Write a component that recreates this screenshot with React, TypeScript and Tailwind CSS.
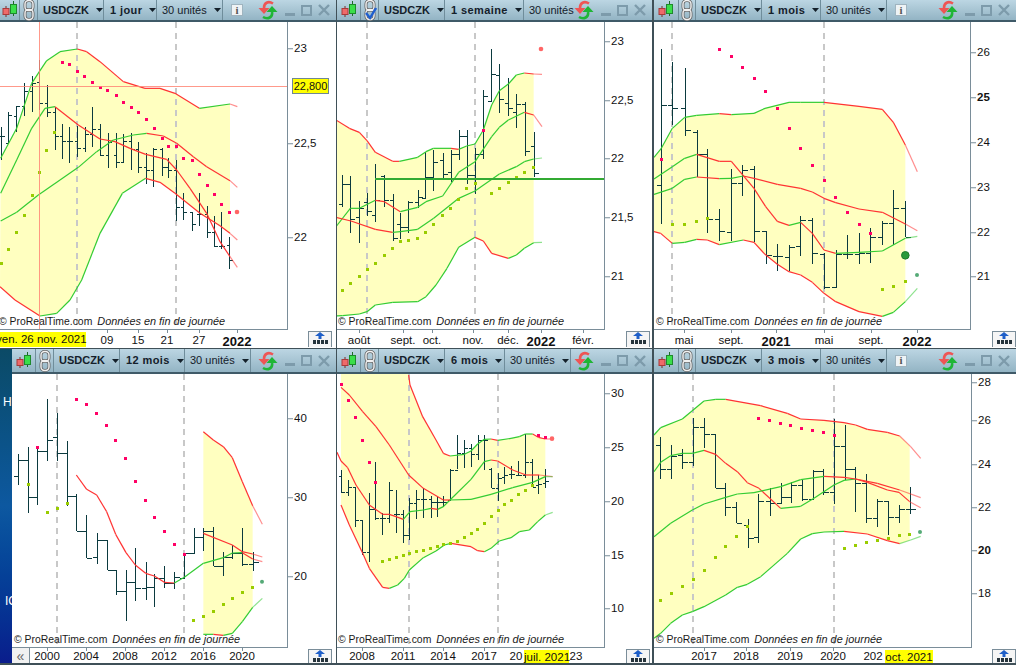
import React from "react";

type Pt = number[];
type Label = { at: number; text: string; bold?: boolean; noTick?: boolean };
type Flag = { text: string; left: number; width: number };

type Chart = {
  ox: number;
  oy: number;
  x0: number;
  y0: number;
  w: number;
  h: number;
  end: number;
  upper: Pt[];
  lower: Pt[];
  lines: Pt[][];
  prefix?: Pt[];
  bars: number[][];
  pink: Pt[];
  olive: Pt[];
  dashed: number[];
  lastRed?: Pt;
  lastGreen?: Pt;
  bigGreen?: Pt;
};

const BAR = "#0b3a3f";
const RED = "#ff3333";
const GREEN = "#33cc33";

const chart1: Chart = {
  ox: 0, oy: 60, x0: 0, y0: 22, w: 288, h: 308, end: 690,
  upper: [[2,295],[50,205],[95,70],[118,35],[140,2],[180,-25],[232,-33],[260,-25],[300,5],[370,65],[435,85],[480,85],[525,100],[598,145],[690,132],[712,140]],
  lower: [[0,680],[45,720],[120,768],[170,760],[210,720],[245,660],[300,520],[367,400],[437,355],[480,367],[525,400],[600,460],[660,497],[690,520],[712,540]],
  lines: [
    [[2,400],[50,300],[95,205],[135,145],[165,140],[235,195],[300,237],[345,245],[390,265],[437,283],[500,298],[530,330],[570,385],[620,460],[660,545],[690,590],[712,622]],
    [[2,483],[50,457],[115,405],[180,360],[235,322],[290,275],[340,240],[400,225],[440,220],[490,228],[530,250],[580,290],[620,320],[690,362],[712,382]],
  ],
  bars: [
    [3,200,300,227,227],[25,155,250,248,165],[48,138,215,168,138],[73,70,168,138,93],[95,48,155,93,68],[118,0,150,65,128],[140,75,172,128,157],
    [164,140,270,157,228],[187,192,298,228,243],[208,200,308,243,243],[232,198,292,243,265],[254,200,275,265,222],[277,142,260,222,207],[300,192,288,207,285],
    [323,220,323,285,245],[347,220,325,285,307],[368,222,305,307,243],[392,220,330,243,268],[415,245,340,268,322],[437,280,372,322,330],[460,265,380,330,268],
    [485,265,348,268,322],[505,295,355,322,330],[528,300,482,330,442],[550,398,480,442,455],[575,455,512,455,492],[598,400,498,462,462],[620,437,535,462,517],
    [643,467,560,517,558],[664,457,568,558,558],[688,530,628,555,600],
  ],
  pink: [[187,5],[208,13],[232,32],[253,49],[277,65],[301,80],[322,91],[347,106],[368,125],[392,140],[415,157],[437,178],[461,205],[485,235],[505,257],[529,259],[550,295],[575,301],[598,343],[620,376],[643,403],[664,433],[688,457]],
  olive: [[3,610],[25,568],[49,517],[73,466],[95,404],[118,337],[139,271],[163,217]],
  dashed: [77, 176],
  lastRed: [711,456],
};

const chart2: Chart = {
  ox: 336, oy: 20, x0: 337, y0: 22, w: 268, h: 308, end: 593,
  upper: [[0,300],[40,325],[70,337],[93,362],[118,397],[170,424],[190,424],[245,412],[270,395],[292,385],[345,385],[368,388],[392,378],[417,372],[442,330],[467,255],[490,212],[517,192],[541,165],[565,159],[593,162],[618,163]],
  lower: [[0,888],[20,887],[70,882],[93,875],[118,855],[170,847],[245,845],[270,830],[300,795],[333,745],[368,682],[417,652],[442,663],[467,700],[517,715],[541,705],[565,685],[593,668],[618,667]],
  lines: [
    [[0,620],[43,565],[70,565],[118,541],[145,545],[193,575],[245,562],[270,545],[320,528],[368,457],[417,425],[467,350],[490,322],[517,300],[565,277],[593,285],[618,320]],
    [[0,592],[45,603],[118,628],[170,637],[193,635],[245,628],[293,595],[368,535],[417,513],[490,462],[541,440],[565,425],[593,417],[618,414]],
  ],
  bars: [
    [19,465,560,553,493],[43,467,638,493,598],[70,543,670,592,565],[93,518,587,545,573],[118,432,605,585,541],[145,465,560,468,541],[170,522,662,541,653],
    [193,580,657,612,622],[217,543,638,622,547],[245,510,563,547,530],[268,395,535,535,472],[292,390,512,472,427],[320,400,475,420,462],[344,390,485,457,402],
    [368,330,420,403,348],[392,330,492,348,465],[417,385,523,465,403],[442,210,417,403,227],[466,88,243,243,163],[490,132,278,165,237],[517,175,287,250,265],
    [541,222,323,277,252],[566,247,407,252,393],[593,336,472,377,460],
  ],
  pink: [[442,330]],
  olive: [[19,811],[43,790],[70,769],[94,748],[118,730],[145,706],[169,685],[193,664],[217,661],[244,655],[268,637],[292,613],[319,586],[343,565],[367,538],[391,505],[418,490],[466,520],[490,505],[517,487],[541,472],[565,457],[592,442]],
  dashed: [367, 475],
  lastRed: [615,87],
};

const chart3: Chart = {
  ox: 654, oy: 20, x0: 654, y0: 22, w: 317, h: 308, end: 754,
  upper: [[0,412],[22,385],[55,325],[92,292],[128,286],[196,281],[232,284],[300,280],[333,265],[405,247],[440,247],[510,247],[615,259],[685,268],[718,307],[754,375],[790,455]],
  lower: [[0,635],[20,640],[55,670],[92,667],[128,658],[160,660],[196,674],[268,660],[300,667],[333,703],[370,733],[405,755],[440,765],[475,787],[510,820],[545,845],[615,875],[685,889],[718,877],[754,845],[790,805]],
  lines: [
    [[0,477],[55,440],[92,415],[128,403],[196,424],[232,424],[300,505],[335,560],[370,604],[405,616],[440,607],[475,640],[510,690],[545,700],[615,697],[685,693],[754,655],[790,649]],
    [[0,523],[55,505],[92,478],[128,471],[196,476],[232,475],[268,468],[300,475],[370,493],[440,505],[475,516],[510,535],[545,548],[615,567],[685,577],[754,612],[790,632]],
  ],
  bars: [
    [22,87,613,496,256],[55,127,315,256,265],[92,145,347,265,331],[128,331,470,337,403],[160,387,638,403,598],[196,568,662,598,634],[232,447,662,636,490],
    [265,435,527,490,450],[301,438,667,448,633],[335,635,733,633,706],[370,672,752,709,709],[406,675,752,712,682],[439,588,707,679,601],[475,595,733,601,700],
    [511,700,808,703,800],[545,690,800,800,703],[580,645,718,703,703],[616,640,733,703,700],[649,625,728,700,652],[685,603,675,652,609],[718,510,676,609,565],[754,543,652,565,652],
  ],
  pink: [[22,418],[196,88],[232,109],[265,142],[301,175],[334,214],[370,265],[406,325],[439,385],[475,436],[511,481],[544,532],[580,577],[616,613],[649,640]],
  olive: [[55,613],[91,613],[127,604],[160,595],[685,808],[718,799],[754,784]],
  dashed: [672, 824],
  lastGreen: [789,765],
  bigGreen: [754,706],
};

const chart4: Chart = {
  ox: 0, oy: 375, x0: 12, y0: 374, w: 276, h: 274, end: 758,
  upper: [[610,170],[640,195],[670,215],[697,248],[727,320],[758,392],[787,448]],
  lower: [[610,778],[640,778],[670,781],[697,775],[727,740],[758,697],[787,670]],
  lines: [
    [[229,300],[260,343],[290,360],[320,410],[347,478],[378,533],[406,570],[437,595],[463,603],[493,622],[523,624],[553,607],[610,565],[670,548],[697,534],[727,533],[758,552],[787,560]],
    [[610,475],[697,510],[727,530],[758,537],[787,546]],
  ],
  bars: [
    [55,237,330,303,256],[85,217,413,256,367],[112,212,390,367,229],[142,72,257,229,196],[172,115,257,187,235],[202,198,392,235,363],[229,358,468,363,468],
    [259,420,550,467,548],[290,475,567,547,495],[320,495,585,495,584],[347,585,660,584,647],[377,585,738,647,622],[406,520,678,622,640],[437,560,675,640,635],
    [463,597,695,635,608],[493,573,640,608,625],[523,592,642,625,605],[553,540,608,608,535],[581,460,535,535,487],[610,458,527,487,468],[640,457,573,468,573],
    [670,530,602,573,545],[697,510,553,545,535],[727,458,572,535,568],[758,530,587,568,560],
  ],
  pink: [[112,217],[229,73],[259,88],[289,115],[319,151],[346,196],[376,250],[406,319],[436,376],[463,427],[493,469],[523,508],[553,538]],
  olive: [[85,328],[142,412],[172,400],[202,385],[580,736],[610,724],[640,709],[670,688],[697,670],[727,652],[757,637]],
  dashed: [57, 184],
  lastGreen: [786,620],
};

const chart5: Chart = {
  ox: 336, oy: 375, x0: 337, y0: 374, w: 268, h: 274, end: 628,
  prefix: [[15,-6],[218,-6]],
  upper: [[218,0],[222,30],[260,125],[300,195],[322,235],[342,243],[385,238],[405,228],[425,207],[445,193],[465,192],[485,196],[525,190],[550,185],[568,177],[590,177],[607,187],[628,192],[650,192]],
  lower: [[15,390],[40,450],[80,535],[100,580],[140,637],[160,640],[185,630],[205,610],[220,585],[262,548],[300,528],[325,510],[345,505],[405,515],[425,527],[445,530],[465,520],[490,498],[525,488],[550,470],[580,465],[605,440],[628,420],[650,412]],
  lines: [
    [[3,232],[15,258],[35,278],[60,330],[100,390],[140,418],[160,418],[180,425],[202,433],[222,410],[262,405],[285,400],[305,403],[322,395],[342,375],[405,313],[445,260],[465,255],[485,258],[530,285],[570,300],[610,300],[650,305]],
    [[15,37],[40,60],[80,110],[120,155],[160,210],[218,300],[262,340],[322,375],[342,375],[405,373],[465,358],[530,338],[590,322],[628,305],[650,305]],
  ],
  bars: [
    [15,285,355,303,350],[37,315,362,350,337],[58,337,455,337,435],[79,435,540,435,532],[100,355,560,532,403],[118,262,435,403,428],[139,415,480,428,430],
    [160,320,445,430,345],[181,345,473,418,418],[202,405,503,418,480],[218,370,495,480,385],[241,345,432,385,373],[262,338,430,373,373],[284,363,428,372,380],
    [304,365,425,380,380],[322,363,395,380,380],[343,283,375,375,285],[364,180,283,285,235],[385,195,278,235,220],[406,208,275,220,238],[425,180,255,238,195],
    [445,180,285,195,195],[466,280,340,283,338],[487,295,378,338,308],[505,275,327,305,300],[526,273,312,298,298],[547,258,302,300,300],[568,178,308,300,260],
    [589,253,335,260,335],[607,300,357,330,328],[628,282,338,325,317],
  ],
  pink: [[16,26],[37,76],[58,127],[79,194],[100,262],[118,322],[607,181],[628,187]],
  olive: [[139,559],[160,553],[181,547],[202,541],[220,535],[241,529],[262,526],[283,520],[304,514],[322,508],[343,505],[364,499],[385,487],[406,475],[424,463],[445,445],[466,424],[487,406],[505,388],[526,376],[547,358],[568,346],[589,331]],
  dashed: [409, 498],
  lastRed: [648,191],
};

const chart6: Chart = {
  ox: 654, oy: 375, x0: 654, y0: 374, w: 318, h: 274, end: 767,
  upper: [[0,180],[20,158],[85,132],[150,78],[185,73],[215,73],[320,92],[400,115],[440,132],[510,136],[570,143],[605,150],[640,163],[700,172],[737,183],[770,215],[800,250]],
  lower: [[0,790],[20,775],[50,745],[85,720],[115,710],[150,695],[215,660],[250,637],[280,628],[320,605],[400,535],[440,492],[475,476],[510,471],[570,469],[640,477],[700,497],[737,506],[770,495],[800,484]],
  lines: [
    [[0,290],[20,262],[50,242],[85,235],[115,235],[150,226],[185,238],[215,265],[250,290],[280,323],[315,340],[380,400],[440,394],[480,370],[540,330],[570,316],[605,312],[640,322],[700,345],[735,352],[767,380],[800,398]],
    [[0,485],[50,445],[115,405],[150,387],[215,367],[250,357],[300,353],[380,335],[440,314],[510,304],[570,307],[605,312],[670,325],[737,345],[800,368]],
  ],
  bars: [
    [18,187,313,210,283],[52,210,313,283,242],[85,222,282,240,261],[118,130,272,261,157],[151,130,218,157,178],[184,178,340,178,340],[214,325,422,340,396],
    [247,382,445,396,443],[281,433,520,450,490],[313,357,503,487,379],[347,340,422,379,385],[380,323,385,385,367],[410,320,385,367,330],[443,315,378,330,372],
    [476,285,370,372,288],[508,283,360,288,352],[541,132,387,352,214],[572,150,315,214,283],[604,277,410,283,325],[637,297,443,325,430],[670,373,455,430,377],
    [703,377,480,377,427],[736,390,443,427,403],[767,337,417,403,403],
  ],
  pink: [[313,130],[346,136],[379,145],[409,151],[442,160],[475,166],[508,172],[541,181]],
  olive: [[19,676],[52,655],[85,634],[118,613],[151,586],[184,547],[214,514],[247,484],[280,454],[571,520],[604,511],[637,502],[670,496],[703,490],[736,481],[766,478]],
  dashed: [693, 834],
  lastGreen: [798,471],
};

function bandPoints(c: Chart) {
  const clip = (pts: Pt[]) => {
    const out: Pt[] = [];
    for (let i = 0; i < pts.length; i++) {
      if (pts[i][0] <= c.end) out.push(pts[i]);
      else {
        const a = pts[i - 1];
        const b = pts[i];
        const t = (c.end - a[0]) / (b[0] - a[0]);
        out.push([c.end, a[1] + (b[1] - a[1]) * t]);
        break;
      }
    }
    return out;
  };
  const all = [...(c.prefix ?? []), ...clip(c.upper), ...clip(c.lower).reverse()];
  return all.map((p) => `${c.ox + p[0] / 3},${c.oy + p[1] / 3}`).join(" ");
}

function Trend({ c, pts }: { c: Chart; pts: Pt[] }) {
  let color = GREEN;
  return (
    <>
      {pts.slice(1).map((p, i) => {
        const a = pts[i];
        if (p[1] > a[1]) color = RED;
        else if (p[1] < a[1]) color = GREEN;
        return (
          <line
            key={i}
            x1={c.ox + a[0] / 3}
            y1={c.oy + a[1] / 3}
            x2={c.ox + p[0] / 3}
            y2={c.oy + p[1] / 3}
            stroke={color}
            strokeWidth={1.2}
            opacity={p[0] > c.end ? 0.55 : 1}
          />
        );
      })}
    </>
  );
}

function Bars({ c }: { c: Chart }) {
  const sx = c.bars.length > 1 ? (c.bars[1][0] - c.bars[0][0]) / 3 : 8;
  const tick = Math.round(sx * 0.45);
  return (
    <g stroke={BAR} strokeWidth={1} shapeRendering="crispEdges">
      {c.bars.map((b, i) => {
        const x = Math.round(c.ox + b[0] / 3) + 0.5;
        const o = Math.round(c.oy + b[3] / 3) + 0.5;
        const cl = Math.round(c.oy + b[4] / 3) + 0.5;
        return (
          <g key={i}>
            <line x1={x} x2={x} y1={c.oy + b[1] / 3} y2={c.oy + b[2] / 3} />
            <line x1={x - tick} x2={x} y1={o} y2={o} />
            <line x1={x} x2={x + tick} y1={cl} y2={cl} />
          </g>
        );
      })}
    </g>
  );
}

function ChartDrawing({ c, hLine, cross }: { c: Chart; hLine?: number[]; cross?: number[] }) {
  const sq = (p: Pt, fill: string, k: string) => (
    <rect
      key={k}
      x={Math.round(c.ox + p[0] / 3) - 1}
      y={Math.round(c.oy + p[1] / 3) - 1}
      width={3}
      height={3}
      fill={fill}
      shapeRendering="crispEdges"
    />
  );
  return (
    <svg className="block" width={c.w} height={c.h} viewBox={`${c.x0} ${c.y0} ${c.w} ${c.h}`}>
      <polygon points={bandPoints(c)} fill="#ffffc0" />
      {c.dashed.map((x) => (
        <line key={x} x1={x} x2={x} y1={c.y0} y2={c.y0 + c.h} stroke="#c8c8c8" strokeWidth={2} strokeDasharray="6 5" />
      ))}
      <Bars c={c} />
      <Trend c={c} pts={c.upper} />
      <Trend c={c} pts={c.lower} />
      {c.lines.map((l, i) => (
        <Trend key={i} c={c} pts={l} />
      ))}
      {c.olive.map((p, i) => sq(p, "#99cc00", `o${i}`))}
      {c.pink.map((p, i) => sq(p, "#ff0066", `p${i}`))}
      {c.lastRed && <circle cx={c.ox + c.lastRed[0] / 3} cy={c.oy + c.lastRed[1] / 3} r={2.3} fill="#ff6666" />}
      {c.lastGreen && <circle cx={c.ox + c.lastGreen[0] / 3} cy={c.oy + c.lastGreen[1] / 3} r={2} fill="#55aa77" />}
      {c.bigGreen && (
        <circle cx={c.ox + c.bigGreen[0] / 3} cy={c.oy + c.bigGreen[1] / 3} r={3.8} fill="#2a9a3a" stroke="#1f7a2c" strokeWidth={1} />
      )}
      {hLine && <line x1={hLine[0]} x2={c.x0 + c.w} y1={hLine[1]} y2={hLine[1]} stroke="#33aa33" strokeWidth={2} />}
      {cross && (
        <g stroke="#ff8877" strokeWidth={1} shapeRendering="crispEdges" opacity={0.85}>
          <line x1={cross[0] + 0.5} x2={cross[0] + 0.5} y1={c.y0} y2={c.y0 + c.h} />
          <line x1={c.x0} x2={c.x0 + c.w} y1={cross[1] + 0.5} y2={cross[1] + 0.5} />
        </g>
      )}
    </svg>
  );
}

function CandleIcon() {
  return (
    <svg width="16" height="18" viewBox="0 0 16 18">
      <line x1="4" x2="4" y1="5" y2="16" stroke="#7a2a2a" />
      <rect x="1" y="7.5" width="6" height="6" fill="#ee6a6a" stroke="#a83a3a" />
      <line x1="11.5" x2="11.5" y1="0" y2="15" stroke="#1f6a2a" />
      <rect x="8.5" y="3.5" width="6" height="9" fill="#3ade4a" stroke="#1e8a2c" />
    </svg>
  );
}

function LinkIcon({ checked }: { checked?: boolean }) {
  return (
    <svg width="14" height="22" viewBox="0 0 14 22">
      <rect x="3" y="1.5" width="8" height="10" rx="3.5" fill="none" stroke="#666" strokeWidth="3" />
      <rect x="3" y="10.5" width="8" height="10" rx="3.5" fill="none" stroke="#666" strokeWidth="3" />
      <rect x="3" y="1.5" width="8" height="10" rx="3.5" fill="none" stroke="#f2f2f2" strokeWidth="1.4" />
      <rect x="3" y="10.5" width="8" height="10" rx="3.5" fill="none" stroke="#f2f2f2" strokeWidth="1.4" />
      {checked && <path d="M3 14 L7 19 L13 9" fill="none" stroke="#1f5fd0" strokeWidth="2.4" />}
    </svg>
  );
}

function RefreshIcon() {
  return (
    <svg width="20" height="20" viewBox="0 0 20 20">
      <path d="M15 3.5 C10 0.5 6 3 6 8" fill="none" stroke="#ee5555" strokeWidth="2.6" />
      <polygon points="0.5,8 11.5,8 6,14" fill="#ee5555" />
      <path d="M5 17 C10 20 15 17 14 12" fill="none" stroke="#1fb535" strokeWidth="2.6" />
      <polygon points="8.5,12 19.5,12 14,6" fill="#1fb535" />
    </svg>
  );
}

function Caret() {
  return (
    <svg className="ml-[7px] shrink-0" width="7" height="4" viewBox="0 0 7 4">
      <polygon points="0,0 7,0 3.5,4" fill="#14202a" />
    </svg>
  );
}

function Controls() {
  return (
    <div className="ml-auto flex items-center pr-[6px]">
      <RefreshIcon />
      <div className="ml-[7px] flex items-center gap-[6px]">
        <div className="mt-[8px] h-[3px] w-[10px] bg-[#7d9bab]" />
        <div className="h-[11px] w-[11px] border-2 border-[#7d9bab]" />
        <svg width="12" height="12" viewBox="0 0 12 12">
          <path d="M1 1 L11 11 M11 1 L1 11" stroke="#7d9bab" strokeWidth="2.4" />
        </svg>
      </div>
    </div>
  );
}

type HeaderProps = {
  tf: string;
  w: number[];
  info?: boolean;
  checked?: boolean;
  noCaret?: boolean;
  tall?: boolean;
};

function Header({ tf, w, info, checked, noCaret, tall }: HeaderProps) {
  const sep = "flex h-full shrink-0 items-center whitespace-nowrap border-r border-[#6f8d9b]";
  return (
    <div
      className={`flex shrink-0 items-stretch border-b-2 border-[#3f5a68] bg-gradient-to-b from-[#bcd6e3] to-[#93b4c4] text-[11px] text-[#14202a] ${
        tall ? "h-[25px]" : "h-[22px]"
      }`}
    >
      <div className={`${sep} justify-center`} style={{ width: w[0] }}>
        <CandleIcon />
      </div>
      <div className={`${sep} justify-center`} style={{ width: w[1] }}>
        <LinkIcon checked={checked} />
      </div>
      <div className={`${sep} pl-[5px] font-bold`} style={{ width: w[2] }}>
        USDCZK
        <Caret />
      </div>
      <div className={`${sep} pl-[6px] font-bold tracking-[0.4px]`} style={{ width: w[3] }}>
        {tf}
        <Caret />
      </div>
      {noCaret ? (
        <div className="flex h-full items-center whitespace-nowrap pl-[5px]">30 unités</div>
      ) : (
        <div className={`${sep} pl-[5px]`} style={{ width: w[4] }}>
          30 unités
          <Caret />
        </div>
      )}
      {info && (
        <div className="ml-[8px] flex h-full items-center">
          <div className="flex h-[12px] w-[12px] items-center justify-center border border-[#9fb4bf] bg-[#eef3f5] font-['Liberation_Serif',serif] text-[11px] font-bold text-[#555]">
            i
          </div>
        </div>
      )}
      <Controls />
    </div>
  );
}

type Win = {
  width: number;
  c: Chart;
  head: HeaderProps;
  axis: Label[];
  x: Label[];
  flag?: Flag;
  footerClass: string;
  btnClass: string;
  collapse?: boolean;
  value?: { y: number; text: string };
  hLine?: number[];
  cross?: number[];
  rowH: string;
};

function Window({ width, c, head, axis, x, flag, footerClass, btnClass, collapse, value, hLine, cross, rowH }: Win) {
  const tall = head.tall;
  return (
    <div className="flex h-full shrink-0 flex-col bg-white" style={{ width }}>
      <Header {...head} />
      <div className="flex min-h-0 flex-1">
        <div className="relative shrink-0" style={{ width: c.w, height: c.h }}>
          <ChartDrawing c={c} hLine={hLine} cross={cross} />
          <div className="absolute inset-y-0 right-0 w-px bg-[#7a8d99]" />
          <div className="absolute inset-x-0 bottom-0 h-px bg-[#7a8d99]" />
          <div className={`absolute bottom-[1px] flex items-baseline gap-[5px] whitespace-nowrap leading-[14px] text-[#1a1a1a] ${footerClass}`}>
            <span className="text-[10.4px]">© ProRealTime.com</span>
            <span className="text-[10.9px] italic">Données en fin de journée</span>
          </div>
        </div>
        <div className="relative flex-1">
          {axis.map((l) => (
            <div key={l.text} style={{ top: l.at - c.y0 + 1 }} className="absolute left-0 flex -translate-y-1/2 items-center">
              <div className="h-px w-[5px] bg-[#7a8d99]" />
              <span className={`ml-[1px] text-[11.5px] leading-none text-[#111] ${l.bold ? "font-bold" : ""}`}>{l.text}</span>
            </div>
          ))}
          {value && (
            <div
              style={{ top: value.y - c.y0 }}
              className="absolute left-[4px] w-[37px] -translate-y-1/2 border border-[#6f8793] bg-[#ffff00] text-center text-[11px] leading-[14px] text-[#111]"
            >
              {value.text}
            </div>
          )}
        </div>
      </div>
      <div className={`relative shrink-0 overflow-hidden bg-white ${rowH}`}>
        {x.map((l, i) => (
          <React.Fragment key={i}>
            {!l.noTick && <div style={{ left: l.at - c.x0 }} className="absolute top-0 h-[3px] w-px bg-[#7a8d99]" />}
            <span
              style={{ left: l.at - c.x0 }}
              className={`absolute -translate-x-1/2 whitespace-nowrap leading-none text-[#111] ${tall ? "top-[3px]" : "top-[5px]"} ${
                l.bold ? "text-[13px] font-bold" : "text-[11.5px]"
              }`}
            >
              {l.text}
            </span>
          </React.Fragment>
        ))}
        {flag && (
          <div
            style={{ left: flag.left - c.x0, width: flag.width }}
            className={`absolute whitespace-nowrap bg-[#ffff00] text-center text-[11.5px] leading-[14px] text-[#111] ${
              tall ? "bottom-0 h-[13px]" : "bottom-[1px] h-[15px]"
            }`}
          >
            {flag.text}
          </div>
        )}
        {collapse && (
          <div className="absolute inset-y-0 left-0 flex w-[18px] items-center justify-center border-r border-[#7a8d99] bg-[#f1f1f1] text-[14px] leading-none text-[#666]">
            «
          </div>
        )}
        <div className={`absolute top-[1px] flex h-[16px] w-[24px] flex-col items-center border-x border-t border-[#7a8d99] bg-[#f5f5f5] ${btnClass}`}>
          <svg width="12" height="7" viewBox="0 0 12 7">
            <polygon points="6,0 11,4 7.5,4 7.5,7 4.5,7 4.5,4 1,4" fill="#1f5fc8" />
          </svg>
          <div className="mt-[1px] flex gap-[1px]">
            {[0, 1, 2, 3].map((n) => (
              <div key={n} className="h-[4px] w-[3px] bg-[#26343c]" />
            ))}
          </div>
        </div>
      </div>
    </div>
  );
}

export default function App() {
  return (
    <div className="flex h-[665px] w-[1016px] flex-col gap-[1px] overflow-hidden bg-[#3f5058] font-['Liberation_Sans',Arial,sans-serif]">
      {/* Top row */}
      <div className="flex h-[348px] shrink-0">
        <Window
          width={336}
          c={chart1}
          head={{ tf: "1 jour", w: [20, 18, 66, 53, 66], info: true }}
          axis={[
            { at: 48, text: "23" },
            { at: 143, text: "22,5" },
            { at: 237, text: "22" },
          ]}
          value={{ y: 86, text: "22,800" }}
          cross={[39, 86]}
          x={[
            { at: 107, text: "09" },
            { at: 138, text: "15" },
            { at: 167, text: "21" },
            { at: 199, text: "27" },
            { at: 237, text: "2022", bold: true },
          ]}
          flag={{ text: "ven. 26 nov. 2021", left: -4, width: 90 }}
          footerClass="left-[-1px]"
          btnClass="right-[4px]"
          rowH="h-[18px]"
        />
        <div className="ml-[1px] flex">
          <Window
            width={315}
            c={chart2}
            head={{ tf: "1 semaine", w: [24, 18, 66, 79, 0], checked: true, noCaret: true }}
            axis={[
              { at: 41, text: "23" },
              { at: 100, text: "22,5" },
              { at: 158, text: "22" },
              { at: 217, text: "21,5" },
              { at: 276, text: "21" },
            ]}
            hLine={[375, 179]}
            x={[
              { at: 359, text: "août" },
              { at: 403, text: "sept." },
              { at: 432, text: "oct." },
              { at: 473, text: "nov." },
              { at: 508, text: "déc." },
              { at: 541, text: "2022", bold: true },
              { at: 583, text: "févr." },
            ]}
            footerClass="left-[1px]"
            btnClass="right-[2px]"
            rowH="h-[18px]"
          />
        </div>
        <div className="ml-[2px] flex">
          <Window
            width={362}
            c={chart3}
            head={{ tf: "1 mois", w: [25, 17, 66, 59, 66], info: true }}
            axis={[
              { at: 52, text: "26" },
              { at: 97, text: "25", bold: true },
              { at: 142, text: "24" },
              { at: 187, text: "23" },
              { at: 232, text: "22" },
              { at: 276, text: "21" },
            ]}
            x={[
              { at: 684, text: "mai" },
              { at: 731, text: "sept." },
              { at: 776, text: "2021", bold: true },
              { at: 824, text: "mai" },
              { at: 871, text: "sept." },
              { at: 917, text: "2022", bold: true },
            ]}
            footerClass="left-[2px]"
            btnClass="right-0"
            rowH="h-[18px]"
          />
        </div>
      </div>

      {/* Bottom row */}
      <div className="flex min-h-0 flex-1 pb-[2px]">
        <div className="relative h-full w-[12px] shrink-0 overflow-hidden bg-gradient-to-b from-[#0b4a66] via-[#0d58a0] to-[#0a1c8c] text-[12px] text-white">
          <span className="absolute left-[3px] top-[44px]">H</span>
          <span className="absolute left-[5px] top-[243px]">IC</span>
        </div>
        <Window
          width={324}
          c={chart4}
          head={{ tf: "12 mois", w: [24, 18, 66, 65, 66], tall: true }}
          axis={[
            { at: 418, text: "40" },
            { at: 497, text: "30" },
            { at: 576, text: "20" },
          ]}
          x={[
            { at: 47, text: "2000" },
            { at: 86, text: "2004" },
            { at: 125, text: "2008" },
            { at: 164, text: "2012" },
            { at: 203, text: "2016" },
            { at: 242, text: "2020" },
          ]}
          collapse
          footerClass="left-[2px]"
          btnClass="right-[4px]"
          rowH="h-[15px]"
        />
        <div className="ml-[1px] flex">
          <Window
            width={315}
            c={chart5}
            head={{ tf: "6 mois", w: [24, 18, 66, 60, 66], tall: true }}
            axis={[
              { at: 393, text: "30" },
              { at: 447, text: "25" },
              { at: 501, text: "20" },
              { at: 555, text: "15" },
              { at: 608, text: "10" },
            ]}
            x={[
              { at: 362, text: "2008" },
              { at: 403, text: "2011" },
              { at: 443, text: "2014" },
              { at: 484, text: "2017" },
              { at: 516, text: "20", noTick: true },
              { at: 576, text: "23", noTick: true },
            ]}
            flag={{ text: "juil. 2021", left: 524, width: 45 }}
            footerClass="left-[1px]"
            btnClass="right-[2px]"
            rowH="h-[15px]"
          />
        </div>
        <div className="ml-[2px] flex">
          <Window
            width={362}
            c={chart6}
            head={{ tf: "3 mois", w: [25, 17, 66, 59, 66], info: true, tall: true }}
            axis={[
              { at: 382, text: "28" },
              { at: 420, text: "26" },
              { at: 464, text: "24" },
              { at: 507, text: "22" },
              { at: 550, text: "20", bold: true },
              { at: 593, text: "18" },
            ]}
            x={[
              { at: 704, text: "2017" },
              { at: 746, text: "2018" },
              { at: 790, text: "2019" },
              { at: 833, text: "2020" },
              { at: 873, text: "202", noTick: true },
            ]}
            flag={{ text: "oct. 2021", left: 885, width: 48 }}
            footerClass="left-[2px]"
            btnClass="right-0"
            rowH="h-[15px]"
          />
        </div>
      </div>
    </div>
  );
}
